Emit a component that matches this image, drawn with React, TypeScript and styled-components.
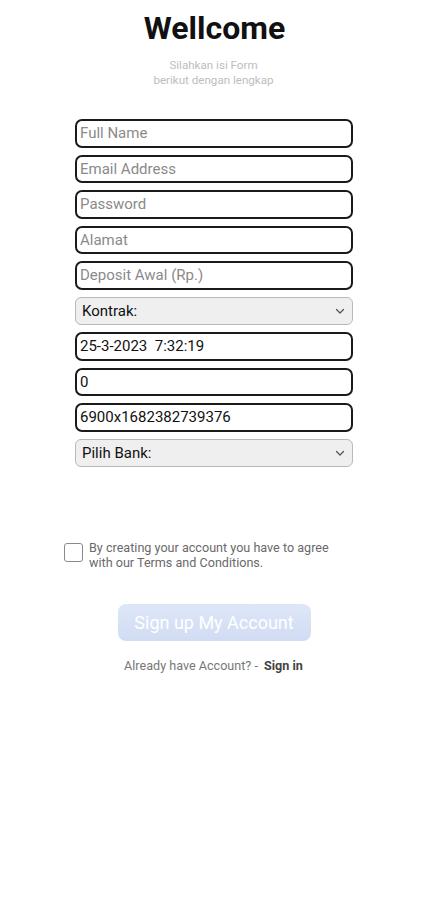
import styled, { createGlobalStyle } from 'styled-components';

const GlobalStyle = createGlobalStyle`
  html, body {
    margin: 0;
    padding: 0;
    background: #ffffff;
    font-family: Roboto, 'Noto Sans', sans-serif;
  }
  * { box-sizing: border-box; }
`;

const fields = [
  { placeholder: 'Full Name' },
  { placeholder: 'Email Address' },
  { placeholder: 'Password', type: 'password' },
  { placeholder: 'Alamat' },
  { placeholder: 'Deposit Awal (Rp.)' },
];

const filled = ['25-3-2023  7:32:19', '0', '6900x1682382739376'];

function Chevron() {
  return (
    <svg width="12" height="12" viewBox="0 0 12 12" fill="none">
      <path d="M2.5 4.5 L6 8 L9.5 4.5" stroke="#555" strokeWidth="1.3" strokeLinecap="round" strokeLinejoin="round" />
    </svg>
  );
}

export default function App() {
  return (
    <>
      <GlobalStyle />
      <Page>
        <Title>Wellcome</Title>
        <Subtitle>
          Silahkan isi Form
          <br />
          berikut dengan lengkap
        </Subtitle>

        <Form>
          {fields.map((f) => (
            <Input key={f.placeholder} placeholder={f.placeholder} type={f.type ?? 'text'} />
          ))}
          <SelectBox>
            <span>Kontrak:</span>
            <Chevron />
          </SelectBox>
          {filled.map((v) => (
            <Input key={v} defaultValue={v} />
          ))}
          <SelectBox>
            <span>Pilih Bank:</span>
            <Chevron />
          </SelectBox>
        </Form>

        <Agree>
          <CheckBox />
          <AgreeText>
            By creating your account you have to agree
            <br />
            with our Terms and Conditions.
          </AgreeText>
        </Agree>

        <SignUpButton>Sign up My Account</SignUpButton>

        <SignInLine>
          Already have Account? - <b>Sign in</b>
        </SignInLine>
      </Page>
    </>
  );
}

const Page = styled.div`
  width: 427px;
  min-height: 900px;
  display: flex;
  flex-direction: column;
  align-items: center;
  padding-top: 9px;
`;

const Title = styled.h1`
  margin: 0;
  font-family: Roboto, sans-serif;
  font-size: 32px;
  font-weight: 700;
  color: #111;
  line-height: 38px;
  padding-left: 2px;
`;

const Subtitle = styled.p`
  margin: 11px 0 0 0;
  font-size: 11.6px;
  line-height: 15px;
  color: #bdbdbd;
  text-align: center;
`;

const Form = styled.div`
  margin-top: 31px;
  width: 278px;
  margin-left: 1px;
  display: flex;
  flex-direction: column;
  gap: 7px;
`;

const Input = styled.input`
  width: 100%;
  height: 28.5px;
  border: 2px solid #1a1a1a;
  border-radius: 7px;
  padding: 0 3px;
  font-family: Roboto, sans-serif;
  font-size: 15px;
  color: #111;
  background: #fff;
  outline: none;

  &::placeholder {
    color: #8a8a8a;
  }
`;

const SelectBox = styled.div`
  width: 100%;
  height: 28.5px;
  border: 1px solid #b9b9b9;
  border-radius: 6px;
  background: #efefef;
  display: flex;
  align-items: center;
  justify-content: space-between;
  padding: 0 6px 0 6px;
  font-size: 15px;
  color: #111;
`;

const Agree = styled.div`
  margin-top: 74px;
  align-self: flex-start;
  padding-left: 64px;
  display: flex;
  align-items: flex-start;
  gap: 6px;
`;

const CheckBox = styled.div`
  width: 19px;
  height: 19px;
  flex-shrink: 0;
  margin-top: 2px;
  border: 1.5px solid #8a8a8a;
  border-radius: 3px;
  background: #fff;
`;

const AgreeText = styled.div`
  font-size: 12.6px;
  line-height: 14.5px;
  color: #6a6a6a;
`;

const SignUpButton = styled.button`
  margin-top: 34px;
  width: 193px;
  height: 37px;
  border: none;
  border-radius: 8px;
  background: linear-gradient(180deg, #dee7f8 0%, #d1dcf3 100%);
  color: #ffffff;
  font-family: Roboto, sans-serif;
  font-size: 18px;
  font-weight: 400;
  margin-left: 1px;
`;

const SignInLine = styled.p`
  margin: 17px 0 0 0;
  font-size: 12.6px;
  color: #777;

  b {
    margin-left: 3px;
    color: #444;
    font-weight: 700;
  }
`;
